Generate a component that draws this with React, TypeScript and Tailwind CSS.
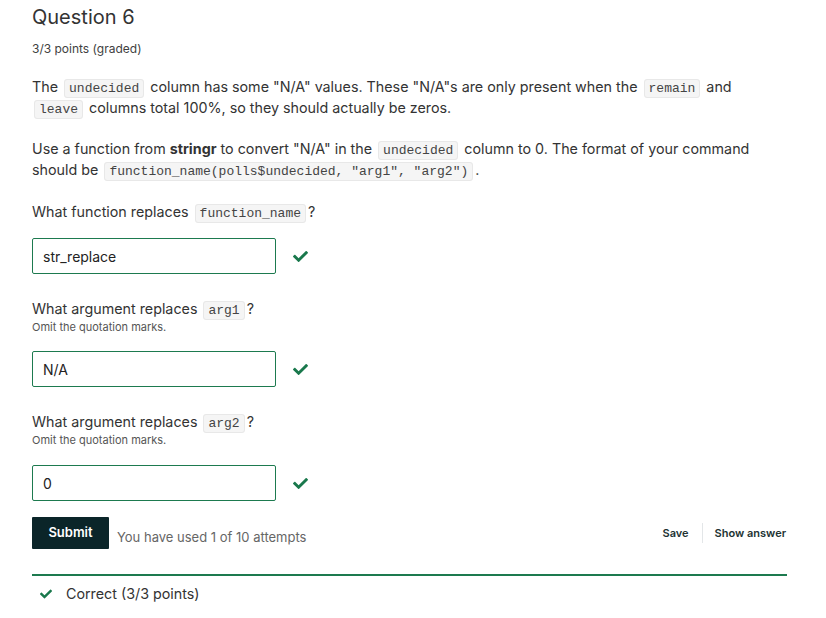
import React from 'react'
import { FaCheck } from 'react-icons/fa'

const Code = ({ children }: { children: React.ReactNode }) => (
  <code className="font-['Liberation_Mono',monospace] text-[13px] leading-[14px] text-[#444] bg-[#f5f5f5] border border-[#e8e8e8] rounded-[3px] px-[4px] py-[1px] mx-[2px]">
    {children}
  </code>
)

const Answer = ({ value, top }: { value: string; top: string }) => (
  <div className={`flex items-center ${top}`}>
    <div className="w-[244px] h-[36px] border border-[#1d7a4f] rounded-[2px] flex items-center px-[10px] text-[14px] text-[#222]">
      {value}
    </div>
    <FaCheck className="ml-[17px] text-[#19784c] w-[15px] h-[15px]" />
  </div>
)

export default function App() {
  return (
    <div className="w-[826px] h-[618px] overflow-hidden bg-white font-['Inter','Noto_Sans',sans-serif] text-[#333] pl-[32px] pr-[39px] pt-[5px]">
      <h2 className="text-[20px] leading-[24px] text-[#333]">Question 6</h2>
      <div className="text-[12px] leading-[16px] text-[#414141] mt-[12px]">3/3 points (graded)</div>

      <p className="text-[14.3px] leading-[21px] text-[#333] mt-[19px]">
        The <Code>undecided</Code> column has some "N/A" values. These "N/A"s are only present when the <Code>remain</Code> and <Code>leave</Code> columns total 100%, so they should actually be zeros.
      </p>
      <p className="text-[14.3px] leading-[21px] text-[#333] mt-[20px]">
        Use a function from <strong>stringr</strong> to convert "N/A" in the <Code>undecided</Code> column to 0. The format of your command should be <Code>function_name(polls$undecided, "arg1", "arg2")</Code>.
      </p>

      <div className="text-[14.3px] leading-[21px] mt-[21px]">
        What function replaces <Code>function_name</Code>?
      </div>
      <Answer value="str_replace" top="mt-[16px]" />

      <div className="text-[14.3px] mt-[25px] leading-[20px]">
        What argument replaces <Code>arg1</Code>?
      </div>
      <div className="text-[11px] text-[#555] leading-[14px] mt-[1px]">Omit the quotation marks.</div>
      <Answer value="N/A" top="mt-[17px]" />

      <div className="text-[14.3px] mt-[25px] leading-[20px]">
        What argument replaces <Code>arg2</Code>?
      </div>
      <div className="text-[11px] text-[#555] leading-[14px] mt-[1px]">Omit the quotation marks.</div>
      <Answer value="0" top="mt-[18px]" />

      <div className="flex items-center mt-[16px]">
        <button className="w-[77px] h-[32px] bg-[#0b2529] text-white text-[13px] font-semibold rounded-[1px]">
          Submit
        </button>
        <span className="ml-[8px] mt-[10px] text-[13px] text-[#666]">You have used 1 of 10 attempts</span>
        <div className="ml-auto flex items-center text-[11px] font-semibold text-[#233]">
          <span className="px-[13px]">Save</span>
          <span className="w-px h-[20px] bg-[#e3e6e8]" />
          <span className="pl-[12px] pr-[1px]">Show answer</span>
        </div>
      </div>

      <div className="mt-[25px] border-t-2 border-[#1d7a4f] flex items-center pt-[8px] pl-[8px] text-[14.3px] leading-[20px] text-[#333]">
        <FaCheck className="text-[#19784c] w-[12px] h-[12px] mr-[14px]" />
        Correct (3/3 points)
      </div>
    </div>
  )
}
